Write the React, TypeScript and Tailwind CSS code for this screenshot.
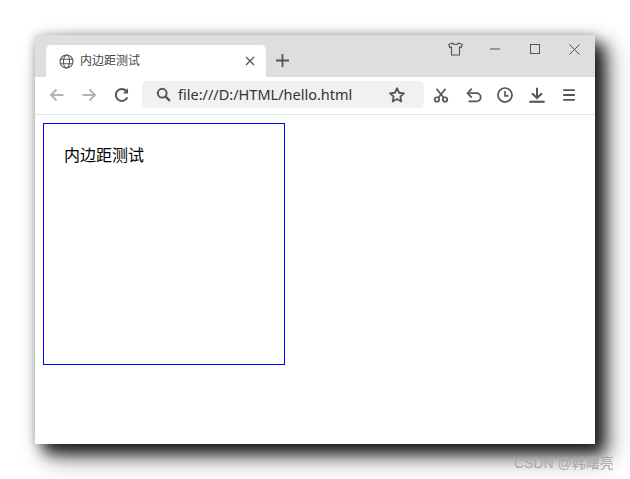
import React from "react";

const cjk = "font-['Liberation_Sans','Noto_Sans_CJK_SC',sans-serif]";

function Ico({ w = 20, children, className = "" }: { w?: number; children: React.ReactNode; className?: string }) {
  return (
    <svg width={w} height={w} viewBox="0 0 20 20" fill="none" stroke="#555" strokeWidth="2" className={"block shrink-0 " + className}>
      {children}
    </svg>
  );
}

export default function App() {
  return (
    <div className={"relative w-[630px] h-[479px] overflow-hidden bg-white pl-[35px] pt-[35px] " + cjk}>
      <div className="w-[560px] h-[409px] bg-white flex flex-col shadow-[9px_9px_14px_rgba(0,0,0,0.8),13px_13px_24px_rgba(0,0,0,0.45),0_0_10px_rgba(0,0,0,0.2)]">
        {/* title bar */}
        <div className="h-[42px] bg-[#dedede] flex items-end pl-[11px] shrink-0">
          <div className="w-[220px] h-[32px] bg-white rounded-t-[5px] flex items-center pl-[13px] pr-[11px]">
            <svg width="15" height="15" viewBox="0 0 15 15" fill="none" stroke="#555" strokeWidth="1.1" className="block shrink-0">
              <circle cx="7.5" cy="7.5" r="6.5" />
              <ellipse cx="7.5" cy="7.5" rx="3" ry="6.5" />
              <path d="M1 5.3h13M1 9.7h13" />
            </svg>
            <span className="ml-[6px] text-[12px] text-[#444] leading-none">内边距测试</span>
            <svg width="10" height="10" viewBox="0 0 10 10" stroke="#555" strokeWidth="1.3" className="block ml-auto">
              <path d="M1 1l8 8M9 1l-8 8" />
            </svg>
          </div>
          <svg width="13" height="13" viewBox="0 0 13 13" stroke="#555" strokeWidth="1.8" className="block ml-[10px] mb-[10px]">
            <path d="M6.5 0v13M0 6.5h13" />
          </svg>
          <div className="ml-auto self-start flex items-center h-[28px]">
            <svg width="15" height="14" viewBox="0 0 15 14" fill="none" stroke="#555" strokeWidth="1.1" className="block mr-[27px]">
              <path d="M4.5 1L0.7 2.5l1 3 1.8-.5V13h8V5l1.8.5 1-3L10.5 1C10 3 5 3 4.5 1z" />
            </svg>
            <svg width="10" height="2" viewBox="0 0 10 2" stroke="#555" strokeWidth="1" className="block mr-[30px]">
              <path d="M0 1h10" />
            </svg>
            <svg width="10" height="10" viewBox="0 0 10 10" fill="none" stroke="#555" strokeWidth="1" className="block mr-[29px]">
              <rect x=".5" y=".5" width="9" height="9" />
            </svg>
            <svg width="11" height="11" viewBox="0 0 11 11" stroke="#555" strokeWidth="1" className="block mr-[15px]">
              <path d="M.5.5l10 10M10.5.5l-10 10" />
            </svg>
          </div>
        </div>
        {/* toolbar */}
        <div className="h-[38px] border-b border-[#e2e4e8] flex items-center shrink-0 pl-[12px] pb-[2px]">
          <Ico>
            <path d="M16.5 10H4M9.5 4.5L4 10l5.5 5.5" stroke="#b4b4b4" />
          </Ico>
          <Ico className="ml-[12px]">
            <path d="M3.5 10H16M10.5 4.5L16 10l-5.5 5.5" stroke="#b4b4b4" />
          </Ico>
          <Ico className="ml-[13px]">
            <path d="M15.3 12.3A6 6 0 1 1 14.2 5.8L15.6 7.3" strokeWidth="2" />
            <path d="M16 3.2v5.2h-5.2z" fill="#555" stroke="none" />
          </Ico>
          <div className="ml-[10px] w-[282px] h-[27px] rounded-[5px] bg-[#f1f1f1] flex items-center pl-[13px] pr-[18px]">
            <Ico w={17}>
              <circle cx="8.5" cy="8.5" r="5.2" strokeWidth="2.3" />
              <path d="M12.5 12.5l5 5" strokeWidth="2.6" />
            </Ico>
            <span className="ml-[6px] font-['Noto_Sans',sans-serif] text-[14.5px] leading-none text-[#333] whitespace-nowrap">file:///D:/HTML/hello.html</span>
            <Ico w={18} className="ml-auto">
              <path d="M10 2.5l2.3 5 5.4.6-4 3.7 1.1 5.4L10 14.5 5.2 17.2l1.1-5.4-4-3.7 5.4-.6z" strokeWidth="2" strokeLinejoin="round" />
            </Ico>
          </div>
          <Ico w={18} className="ml-[8px]">
            <circle cx="5.5" cy="15" r="2.5" strokeWidth="1.9" />
            <circle cx="14.5" cy="15" r="2.5" strokeWidth="1.9" />
            <path d="M7 13L15 3M13 13L5 3" strokeWidth="1.9" />
          </Ico>
          <Ico w={18} className="ml-[14px]">
            <path d="M6 8h8a4 4 0 0 1 0 9H5" />
            <path d="M8.5 3L4 8l4.5 5" />
          </Ico>
          <Ico w={18} className="ml-[14px]">
            <circle cx="10" cy="10" r="7.8" strokeWidth="1.9" />
            <path d="M10 5.5V11h4" strokeWidth="1.8" />
          </Ico>
          <Ico w={18} className="ml-[14px]">
            <path d="M10 2v11M4.5 8l5.5 5.5L15.5 8" strokeWidth="2.2" />
            <path d="M1.5 17.5h17" strokeWidth="2.4" />
          </Ico>
          <Ico w={18} className="ml-[14px]">
            <path d="M3.5 4.5h13M3.5 10h13M3.5 15.5h13" strokeWidth="2" />
          </Ico>
        </div>
        {/* page */}
        <div className="flex-1 pl-[8px] pt-[8px]">
          <div className="w-[242px] h-[242px] border border-[#0000ff] p-[20px] text-[16px] leading-[24px] text-black">
            内边距测试
          </div>
        </div>
      </div>
      <span className="absolute left-[514px] top-[454px] text-[14px] leading-[18px] text-[#a8a8a8] whitespace-nowrap">
        CSDN @韩曙亮
      </span>
    </div>
  );
}
